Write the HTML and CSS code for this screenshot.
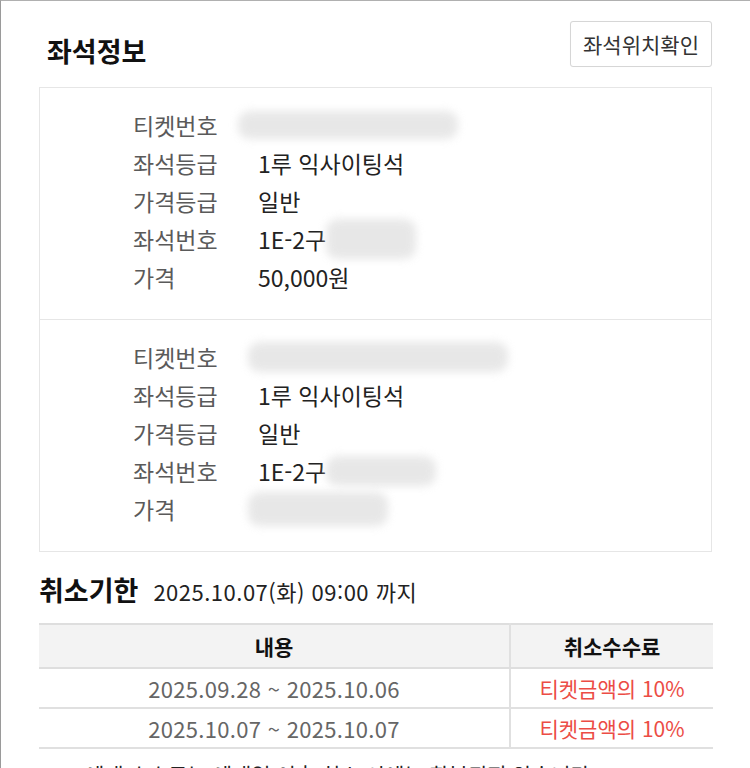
FILE: index.html
```html
<!DOCTYPE html>
<html lang="ko">
<head>
<meta charset="utf-8">
<link rel="stylesheet" href="styles.css">
</head>
<body>
<div class="page">
  <div class="head">
    <h2 class="title">좌석정보</h2>
    <button class="btn">좌석위치확인</button>
  </div>
  <div class="card">
    <div class="sec">
      <div class="row"><span class="lbl">티켓번호</span><span class="val"><span class="blur b1"></span></span></div>
      <div class="row"><span class="lbl">좌석등급</span><span class="val">1루 익사이팅석</span></div>
      <div class="row"><span class="lbl">가격등급</span><span class="val">일반</span></div>
      <div class="row"><span class="lbl">좌석번호</span><span class="val">1E-2구<span class="blur b2"></span></span></div>
      <div class="row"><span class="lbl">가격</span><span class="val">50,000원</span></div>
    </div>
    <div class="sec">
      <div class="row"><span class="lbl">티켓번호</span><span class="val"><span class="blur b3"></span></span></div>
      <div class="row"><span class="lbl">좌석등급</span><span class="val">1루 익사이팅석</span></div>
      <div class="row"><span class="lbl">가격등급</span><span class="val">일반</span></div>
      <div class="row"><span class="lbl">좌석번호</span><span class="val">1E-2구<span class="blur b4"></span></span></div>
      <div class="row"><span class="lbl">가격</span><span class="val"><span class="blur b5"></span></span></div>
    </div>
  </div>
  <div class="cancel">
    <h2 class="title2">취소기한</h2>
    <span class="date">2025.10.07(화) 09:00 까지</span>
  </div>
  <table class="fee">
    <thead>
      <tr><th class="c1">내용</th><th class="c2">취소수수료</th></tr>
    </thead>
    <tbody>
      <tr><td class="c1">2025.09.28 ~ 2025.10.06</td><td class="c2 red">티켓금액의 10%</td></tr>
      <tr><td class="c1">2025.10.07 ~ 2025.10.07</td><td class="c2 red">티켓금액의 10%</td></tr>
    </tbody>
  </table>
  <p class="note">예매 수수료는 예매일 이후 취소 시에는 환불되지 않습니다.</p>
</div>
</body>
</html>
```
FILE: styles.css
```css
html, body {
  margin: 0;
  padding: 0;
  background: #fff;
}
body {
  font-family: "Noto Sans CJK KR", "Noto Sans", sans-serif;
  color: #222;
  border-left: 1px solid #9a9a9a;
  border-top: 1px solid #b0b0b0;
  height: 768px;
  overflow: hidden;
  box-sizing: border-box;
}
.page {
  padding: 0 38px 0 38px;
}
.head {
  display: flex;
  justify-content: space-between;
  align-items: center;
  padding-top: 20px;
  height: 46px;
}
.title {
  margin: 13px 0 0 8px;
  font-size: 27px;
  font-weight: 700;
  color: #111;
  line-height: 32px;
}
.btn {
  height: 46px;
  width: 142px;
  padding: 0;
  border: 1px solid #d6d6d6;
  border-radius: 3px;
  background: #fff;
  font-family: inherit;
  font-size: 21px;
  color: #333;
  box-shadow: 0 0 1px rgba(0,0,0,0.06);
}
.card {
  margin-top: 20px;
  border: 1px solid #e6e6e6;
}
.sec {
  padding: 18px 0 23px 93px;
}
.sec + .sec {
  border-top: 1px solid #e6e6e6;
}
.row {
  display: flex;
  height: 38px;
  line-height: 38px;
  font-size: 23px;
}
.lbl {
  width: 125px;
  color: #5a5a5a;
}
.val {
  color: #222;
  display: flex;
  align-items: center;
}
.blur {
  display: inline-block;
  background: #e0e0e0;
  filter: blur(4px);
  opacity: 0.75;
  border-radius: 12px;
}
.b1 { width: 220px; height: 28px; margin-left: -20px; }
.b2 { width: 90px; height: 40px; margin-left: 0; }
.b3 { width: 260px; height: 30px; margin-left: -10px; }
.b4 { width: 110px; height: 30px; margin-left: 0; }
.b5 { width: 140px; height: 34px; margin-left: -10px; }
.cancel {
  display: flex;
  align-items: baseline;
  margin-top: 21px;
  height: 34px;
}
.title2 {
  margin: 0 15px 0 0;
  font-size: 27px;
  font-weight: 700;
  color: #111;
  line-height: 34px;
}
.date {
  font-size: 22px;
  color: #222;
  letter-spacing: 0.5px;
}
.fee {
  margin-top: 16px;
  width: 674px;
  border-collapse: collapse;
}
.fee th {
  height: 42px;
  background: #f3f3f3;
  border-top: 2px solid #dedede;
  border-bottom: 2px solid #dedede;
  font-weight: 700;
  font-size: 21px;
  color: #111;
  padding: 0;
}
.fee td {
  height: 38px;
  border-bottom: 2px solid #e0e0e0;
  color: #666;
  text-align: center;
  padding: 0;
  font-size: 22px;
  letter-spacing: 0.3px;
}
.fee .c1 {
  width: 470px;
  border-right: 2px solid #e0e0e0;
}
.fee .red {
  color: #ec4c45;
  font-size: 21px;
  letter-spacing: 0;
}
.note {
  margin: 10px 0 0 46px;
  font-size: 21px;
  color: #222;
}
```
